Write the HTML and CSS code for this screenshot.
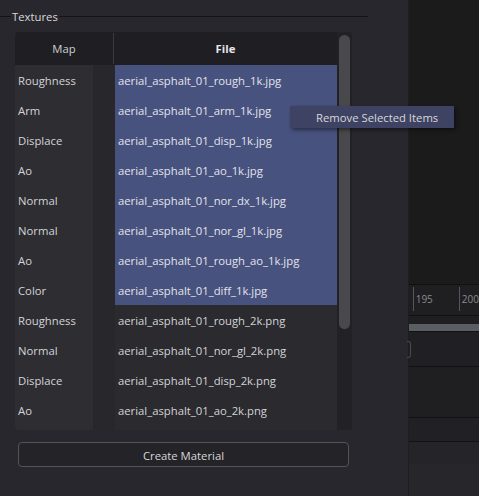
FILE: index.html
```html
<!DOCTYPE html>
<html>
<head>
<meta charset="utf-8">
<link rel="stylesheet" href="styles.css">
</head>
<body>
<div class="panel">
  <div class="group-title"><span class="line-l"></span><span class="title">Textures</span><span class="line-r"></span></div>
  <div class="table">
    <div class="thead">
      <div class="th map">Map</div>
      <div class="th file">File</div>
    </div>
    <div class="tbody">
      <div class="row sel"><div class="c map">Roughness</div><div class="c file">aerial_asphalt_01_rough_1k.jpg</div></div>
      <div class="row sel"><div class="c map">Arm</div><div class="c file">aerial_asphalt_01_arm_1k.jpg</div></div>
      <div class="row sel"><div class="c map">Displace</div><div class="c file">aerial_asphalt_01_disp_1k.jpg</div></div>
      <div class="row sel"><div class="c map">Ao</div><div class="c file">aerial_asphalt_01_ao_1k.jpg</div></div>
      <div class="row sel"><div class="c map">Normal</div><div class="c file">aerial_asphalt_01_nor_dx_1k.jpg</div></div>
      <div class="row sel"><div class="c map">Normal</div><div class="c file">aerial_asphalt_01_nor_gl_1k.jpg</div></div>
      <div class="row sel"><div class="c map">Ao</div><div class="c file">aerial_asphalt_01_rough_ao_1k.jpg</div></div>
      <div class="row sel"><div class="c map">Color</div><div class="c file">aerial_asphalt_01_diff_1k.jpg</div></div>
      <div class="row"><div class="c map">Roughness</div><div class="c file">aerial_asphalt_01_rough_2k.png</div></div>
      <div class="row"><div class="c map">Normal</div><div class="c file">aerial_asphalt_01_nor_gl_2k.png</div></div>
      <div class="row"><div class="c map">Displace</div><div class="c file">aerial_asphalt_01_disp_2k.png</div></div>
      <div class="row"><div class="c map">Ao</div><div class="c file">aerial_asphalt_01_ao_2k.png</div></div>
      <div class="row"><div class="c map"></div><div class="c file"></div></div>
    </div>
    <div class="scroll"><div class="handle"></div></div>
  </div>
  <button class="btn">Create Material</button>
  <div class="menu">Remove Selected Items</div>
</div>
<div class="side">
  <div class="s-top"></div>
  <div class="ruler"><span class="tick">195</span><span class="tick">200</span></div>
  <div class="s-gap"></div>
  <div class="s-bar"></div>
  <div class="s-b1"><span class="knob"></span></div>
  <div class="s-b2"></div>
  <div class="s-b3"></div>
  <div class="s-b4"></div>
  <div class="s-b5"></div>
</div>
</body>
</html>
```

FILE: styles.css
```css
* { box-sizing: border-box; }
html, body { margin: 0; padding: 0; }
body {
  width: 479px;
  height: 496px;
  overflow: hidden;
  display: flex;
  background: #1b1b1c;
  font-family: "Open Sans", "Noto Sans", sans-serif;
  font-size: 11.3px;
  color: #d4d4d6;
}
.panel {
  position: relative;
  width: 411px;
  height: 496px;
  background: #28272d;
  padding-top: 9px;
}
.group-title {
  display: flex;
  align-items: center;
  width: 368px;
  height: 15px;
}
.line-l { width: 11px; border-top: 1px solid #141416; }
.line-r { flex: 1; border-top: 1px solid #141416; }
.title { padding: 0 1px; line-height: 15px; color: #d8d8da; }
.table {
  position: relative;
  margin: 8px 0 0 15px;
  width: 337px;
  height: 398px;
  background: #1f1e23;
  border-radius: 4px;
  overflow: hidden;
}
.thead {
  display: flex;
  height: 33px;
  width: 322px;
}
.th {
  display: flex;
  align-items: center;
  justify-content: center;
  color: #d0d0d2;
}
.th.map { width: 99px; border-right: 1px solid #3a3a40; margin: 1px 0; }
.th.file { flex: 1; font-weight: bold; color: #e6e6e8; }
.tbody { width: 322px; }
.row { display: flex; height: 30px; }
.c { display: flex; align-items: center; white-space: nowrap; overflow: hidden; padding-top: 1px; }
.c.map {
  width: 100px;
  padding-left: 3px;
  background: linear-gradient(to right, #2d2d32 78px, #27272c 78px);
}
.c.file { flex: 1; padding-left: 3px; background: #2a2a2f; }
.row.sel .c.file { background: #47527f; color: #e4e4ea; }
.scroll {
  position: absolute;
  right: 0;
  top: 0;
  width: 15px;
  height: 100%;
  background: #222226;
  padding: 3px 2px 0 2px;
}
.handle {
  width: 11px;
  height: 294px;
  border-radius: 6px;
  background: #49494d;
}
.btn {
  display: block;
  margin: 12px 0 0 18px;
  width: 331px;
  height: 25px;
  background: #232328;
  border: 1px solid #545458;
  border-radius: 4px;
  color: #d6d6d8;
  font-family: inherit;
  font-size: 11.3px;
  padding: 1px 0 0 0;
}
.menu {
  position: absolute;
  left: 290px;
  top: 106px;
  width: 164px;
  height: 22px;
  background: #3e4263;
  color: #d8d8dc;
  padding-left: 26px;
  line-height: 23px;
  box-shadow: 2px 2px 4px rgba(0,0,0,0.45);
}
.side {
  flex: 1;
  display: flex;
  flex-direction: column;
  border-left: 1px solid #1e1e20;
}
.s-top { height: 285px; background: #1b1b1b; border-bottom: 1px solid #111113; }
.ruler {
  height: 31px;
  background: #1f1f22;
  border-bottom: 1px solid #111113;
  display: flex;
  gap: 26px;
  padding: 2px 0 0 4px;
}
.tick {
  border-left: 1px solid #55555a;
  height: 24px;
  padding: 6px 0 0 2px;
  font-size: 10px;
  color: #8a8a8e;
  line-height: 12px;
}
.s-gap { height: 8px; background: #1f1f22; }
.s-bar { height: 8px; background: #5a5e62; border-bottom: 1px solid #111113; }
.s-b1 { position: relative; height: 35px; background: #202024; border-bottom: 1px solid #111113; }
.knob {
  position: absolute;
  left: -2px;
  top: 9px;
  width: 4px;
  height: 17px;
  border: 1px solid #4a4a50;
  border-left: none;
  border-radius: 0 3px 3px 0;
}
.s-b2 { height: 51px; background: #1f1f22; border-bottom: 1px solid #111113; }
.s-b3 { height: 24px; background: #212125; border-bottom: 1px solid #111113; }
.s-b4 { height: 22px; background: #252529; }
.s-b5 { flex: 1; background: #27272b; }
```
